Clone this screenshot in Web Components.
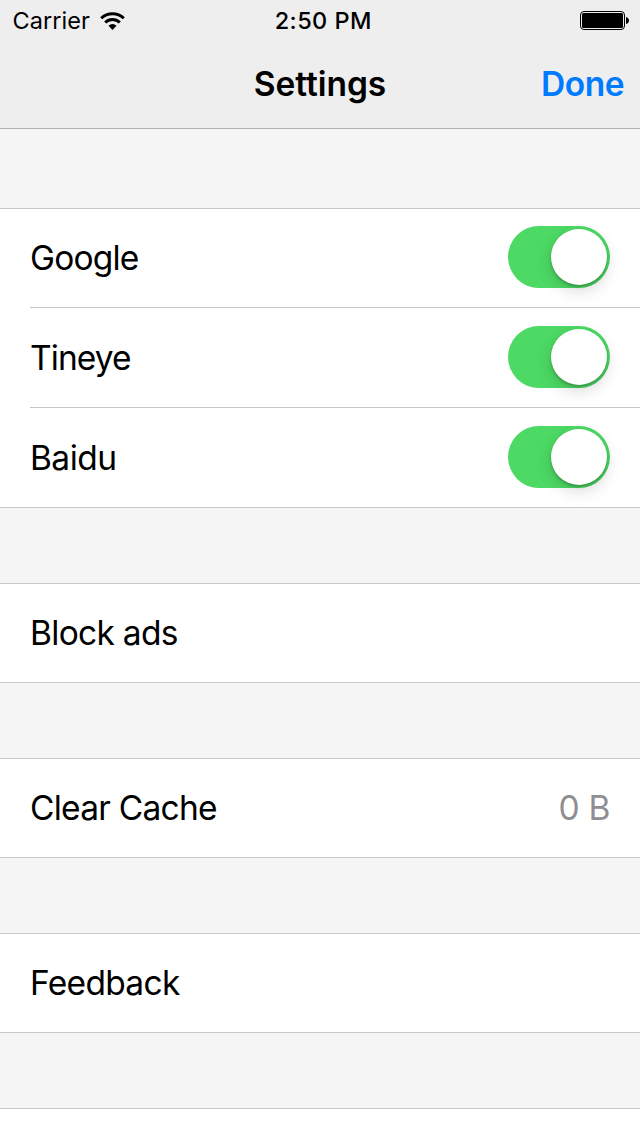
<!DOCTYPE html>
<html lang="en"><head><meta charset="utf-8"><title>Settings</title>
<style>html,body{margin:0;height:100%;overflow:hidden;background:#f5f5f5}body{font-family:Inter,sans-serif;color:#000}</style></head><body>
<settings-screen></settings-screen>
<script>
const define=(name,html)=>{const t=document.createElement('template');t.innerHTML=html;customElements.define(name,class extends HTMLElement{constructor(){super();this.attachShadow({mode:'open'}).append(t.content.cloneNode(true));}});};
define('status-bar',`<style>
:host{display:grid;grid-template-columns:1fr auto 1fr;align-items:center;height:40px;box-sizing:border-box;padding:1px 11px 0 12.5px;line-height:39px}
.left{display:flex;align-items:center;gap:10px}.carrier{font-size:23.5px;letter-spacing:.05px}.time{font-weight:500;font-size:23.5px;letter-spacing:.45px;margin-left:5px}.battery{justify-self:end}svg{display:block}
</style><div class="left"><span class="carrier">Carrier</span><svg width="25" height="18" viewBox="0 0 25 18"><g fill="none" stroke="#000" stroke-width="3"><path d="M1.2 6.3a16.2 16.2 0 0 1 22.6 0"/><path d="M5.2 10.5a10.4 10.4 0 0 1 14.6 0"/></g><path d="M12.5 18l-4-4.3a5.6 5.6 0 0 1 8 0z"/></svg></div><span class="time">2:50 PM</span>
<svg class="battery" width="49" height="19" viewBox="0 0 49 19"><rect x=".5" y=".5" width="44" height="18" rx="3.5" fill="none" stroke="#000"/><rect x="2" y="2" width="41" height="15" rx="1.5"/><path d="M46 6c4 1 4 6 0 7z"/></svg>`);
define('nav-bar',`<style>
:host{display:grid;grid-template-columns:1fr auto 1fr;align-items:center;height:88px;box-sizing:border-box;padding:0 16px 1px;font-size:33.5px;font-weight:600}
.title{letter-spacing:-.05px}
.done{justify-self:end;color:#007aff;letter-spacing:-.5px}
</style><span></span><span class="title"><slot></slot></span><span class="done"><slot name="action"></slot></span>`);
define('toggle-switch',`<style>
:host{display:flex;justify-content:flex-end;box-sizing:border-box;width:102px;height:62px;padding:3px;margin-bottom:1px;border-radius:31px;background:#4cd964}
i{width:56px;height:56px;border-radius:50%;background:#fff;box-shadow:0 6px 16px rgba(0,0,0,.15),0 2px 3px rgba(0,0,0,.22)}
</style><i></i>`);
define('settings-row',`<style>
:host{display:flex;height:100px;box-sizing:border-box;padding-left:30px;font-size:33.5px}
.line{display:flex;flex:1;align-items:center;justify-content:space-between;padding-right:30px;border-bottom:1px solid #c8c7cc}
:host(:last-child) .line{border-color:transparent}
.label{padding-top:1px;letter-spacing:var(--tracking,-.7px)}
::slotted([slot=value]){color:#8e8e93}
</style><div class="line"><span class="label"><slot></slot></span><slot name="value"></slot></div>`);
define('settings-group',`<style>
:host{display:block;background:#fff;margin-bottom:75px;box-shadow:inset 0 1px #c8c7cc,inset 0 -1px #c8c7cc}
</style><slot></slot>`);
define('settings-screen',`<style>
:host{display:block;height:1136px;overflow:hidden}header{background:#eee;border-bottom:1px solid #b0b0b1}main{padding-top:79px}
.size{padding-top:1px;letter-spacing:-.3px}
</style><header><status-bar></status-bar><nav-bar>Settings<span slot="action">Done</span></nav-bar></header>
<main><settings-group><settings-row style="--tracking:-.8px">Google<toggle-switch slot="value"></toggle-switch></settings-row><settings-row style="--tracking:-.9px">Tineye<toggle-switch slot="value"></toggle-switch></settings-row><settings-row style="--tracking:-.55px">Baidu<toggle-switch slot="value"></toggle-switch></settings-row></settings-group>
<settings-group><settings-row>Block ads</settings-row></settings-group>
<settings-group><settings-row style="--tracking:-.75px">Clear Cache<span class="size" slot="value">0 B</span></settings-row></settings-group>
<settings-group><settings-row>Feedback</settings-row></settings-group>
<settings-group><settings-row></settings-row></settings-group></main>`);
</script></body></html>
